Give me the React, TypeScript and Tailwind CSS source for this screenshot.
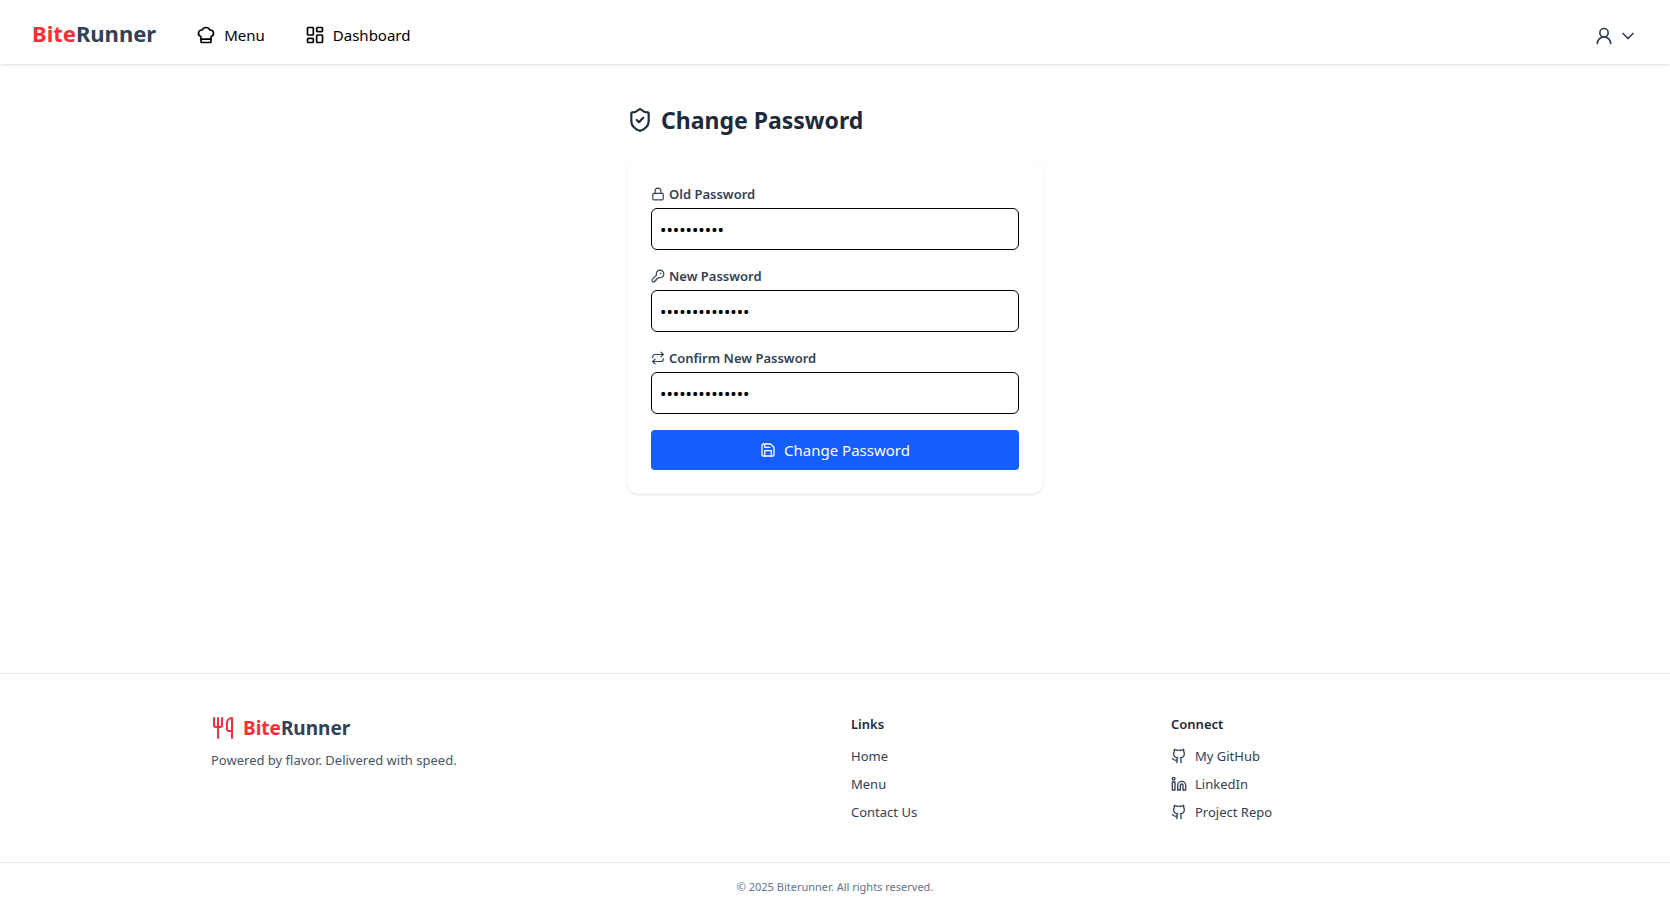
import type { ReactNode } from "react";
import {
  ChefHat,
  ChevronDown,
  Github,
  KeyRound,
  LayoutDashboard,
  Linkedin,
  Lock,
  Repeat,
  Save,
  ShieldCheck,
  UserRound,
  Utensils,
} from "lucide-react";

function Brand() {
  return (
    <>
      <span className="text-[#fb2c36]">Bite</span>
      <span className="text-[#314158]">Runner</span>
    </>
  );
}

function Header() {
  return (
    <header className="bg-white shadow-sm">
      <div className="flex h-16 items-center justify-between px-8">
        <div className="flex items-center gap-10">
          <a href="#" className="pt-0.5 text-[22px] font-bold">
            <Brand />
          </a>
          <nav className="flex items-center gap-10 text-[15px] text-black">
            <a href="#menu" className="flex items-center gap-2 pt-1.5">
              <ChefHat size={20} />
              Menu
            </a>
            <a href="#dashboard" className="flex items-center gap-2 pt-1.5">
              <LayoutDashboard size={20} />
              Dashboard
            </a>
          </nav>
        </div>
        <button type="button" aria-label="Account" className="flex items-center gap-1 pt-2 text-[#314158]">
          <UserRound size={20} />
          <ChevronDown size={20} />
        </button>
      </div>
    </header>
  );
}

type FieldProps = { id: string; label: string; icon: ReactNode; value: string };

function Field({ id, label, icon, value }: FieldProps) {
  return (
    <div className="flex flex-col gap-1">
      <label htmlFor={id} className="flex items-center gap-1 text-[13px] leading-5 font-semibold text-[#314158]">
        {icon}
        {label}
      </label>
      <input
        id={id}
        type="password"
        defaultValue={value}
        className="h-[42px] w-full rounded-md border border-black p-2 text-[17px] leading-6 text-black"
      />
    </div>
  );
}

function PasswordForm() {
  return (
    <main className="mx-auto w-full max-w-md flex-1 px-4 pt-10">
      <h1 className="mb-6 flex items-center gap-2 text-[23px] leading-8 font-bold text-[#1d293d]">
        <ShieldCheck size={26} />
        Change Password
      </h1>
      <form className="flex flex-col gap-4 rounded-xl bg-white p-6 shadow-sm">
        <Field id="old" label="Old Password" icon={<Lock size={14} />} value="abcdefghij" />
        <Field id="new" label="New Password" icon={<KeyRound size={14} />} value="abcdefghijklmn" />
        <Field id="confirm" label="Confirm New Password" icon={<Repeat size={14} />} value="abcdefghijklmn" />
        <button
          type="button"
          className="flex h-10 w-full items-center justify-center gap-2 rounded-sm bg-[#155dfc] text-[15px] text-white"
        >
          <Save size={16} />
          Change Password
        </button>
      </form>
    </main>
  );
}

const links = ["Home", "Menu", "Contact Us"];

const connect = [
  { label: "My GitHub", Icon: Github },
  { label: "LinkedIn", Icon: Linkedin },
  { label: "Project Repo", Icon: Github },
];

function Footer() {
  return (
    <footer className="border-t border-gray-200 bg-white text-[13px] leading-5 text-[#314158]">
      <div className="mx-auto grid max-w-7xl grid-cols-4 gap-8 px-4 py-10">
        <div className="col-span-2">
          <a href="#" className="flex items-center gap-2 text-[19px] leading-7 font-bold">
            <Utensils size={24} className="text-[#fb2c36]" />
            <span>
              <Brand />
            </span>
          </a>
          <p className="mt-2 text-[#45556c]">Powered by flavor. Delivered with speed.</p>
        </div>
        <div>
          <h2 className="mb-3 font-semibold text-[#1d293d]">Links</h2>
          <ul className="flex flex-col gap-2">
            {links.map((label) => (
              <li key={label}>
                <a href="#">{label}</a>
              </li>
            ))}
          </ul>
        </div>
        <div>
          <h2 className="mb-3 font-semibold text-[#1d293d]">Connect</h2>
          <ul className="flex flex-col gap-2">
            {connect.map(({ label, Icon }) => (
              <li key={label}>
                <a href="#" className="flex items-center gap-2">
                  <Icon size={16} />
                  {label}
                </a>
              </li>
            ))}
          </ul>
        </div>
      </div>
      <p className="border-t border-gray-200 py-4 text-center text-[11px] leading-4 text-[#62748e]">
        © 2025 Biterunner. All rights reserved.
      </p>
    </footer>
  );
}

export default function App() {
  return (
    <div className="flex min-h-screen flex-col bg-white font-['Noto_Sans',sans-serif]">
      <Header />
      <PasswordForm />
      <Footer />
    </div>
  );
}
